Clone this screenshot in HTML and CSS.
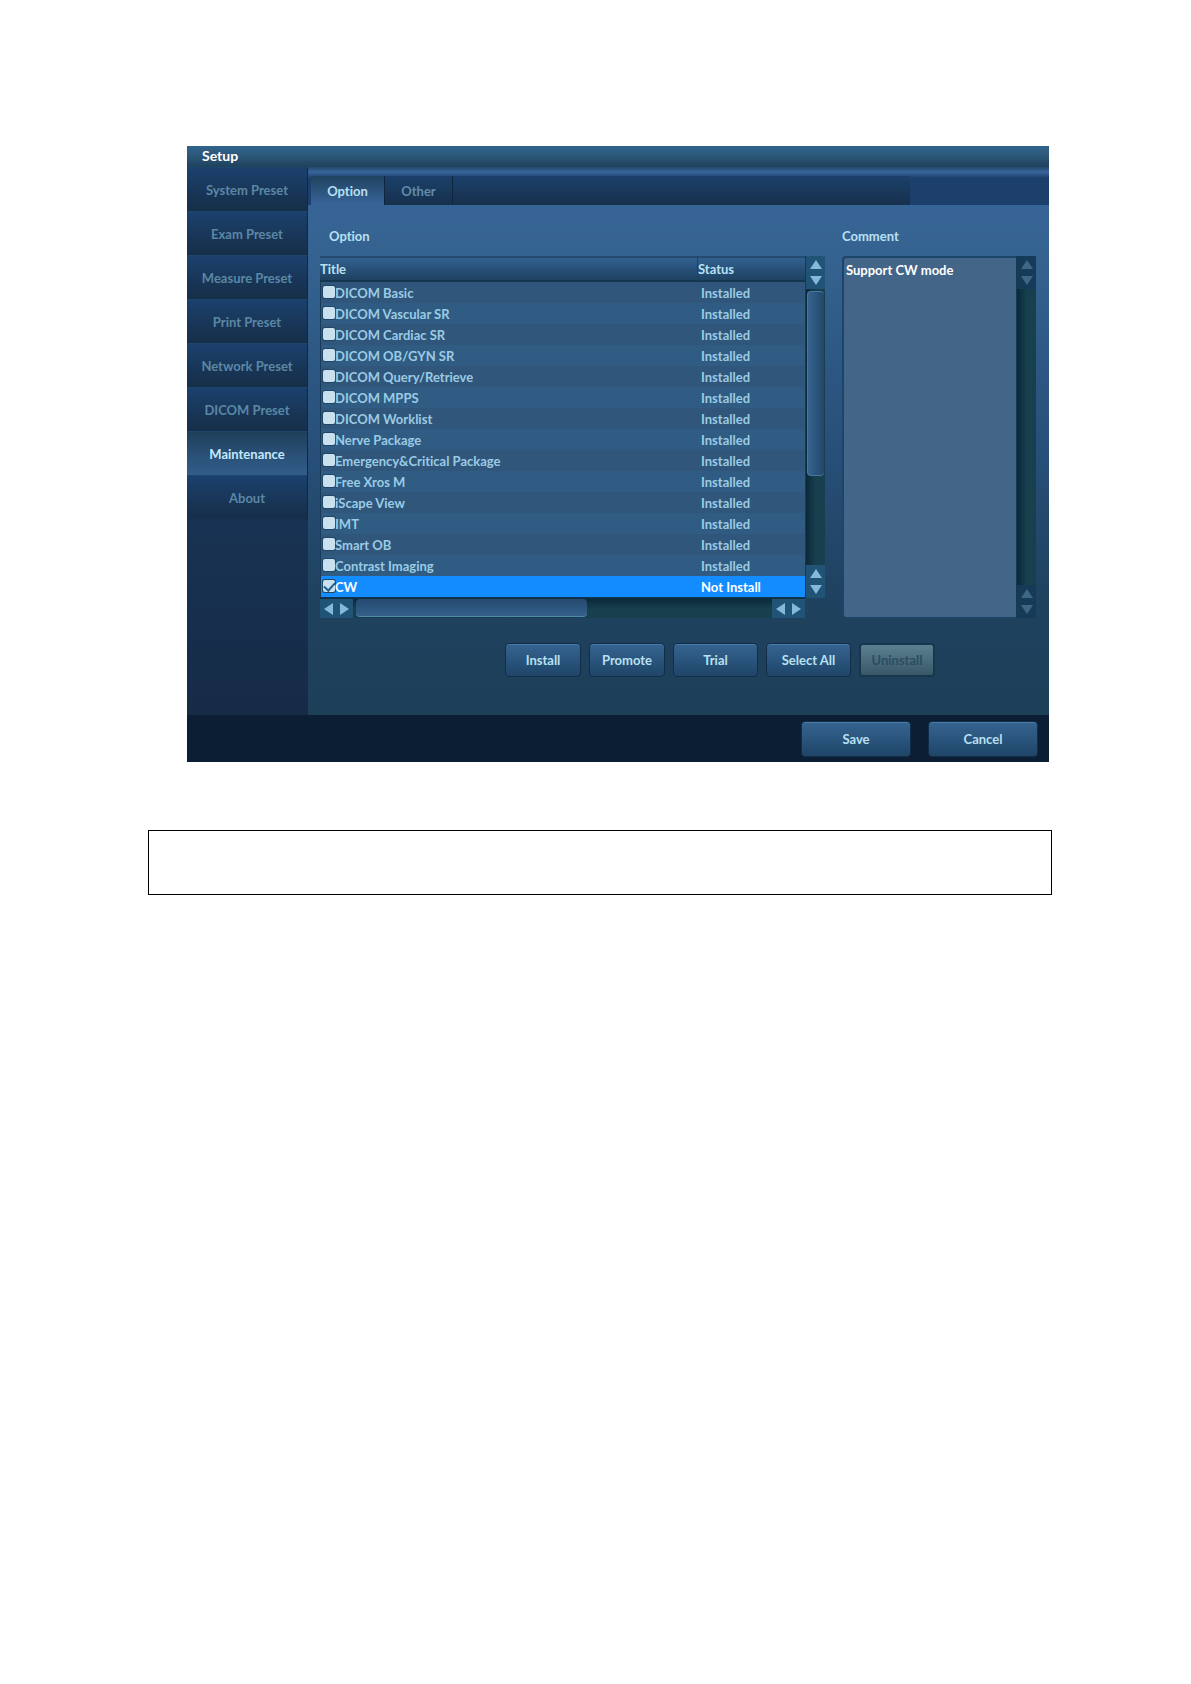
FILE: index.html
```html
<!DOCTYPE html>
<html lang="en">
<head>
    <meta charset="UTF-8">
    <meta name="viewport" content="width=device-width, initial-scale=1.0">
    <title>Setup</title>
    <link rel="stylesheet" href="styles.css">
</head>
<body>
    <div class="window">
        <h1 class="title-bar">Setup</h1>
        <div class="content">
            <nav class="sidebar">
                <button>System Preset</button>
                <button>Exam Preset</button>
                <button>Measure Preset</button>
                <button>Print Preset</button>
                <button>Network Preset</button>
                <button>DICOM Preset</button>
                <button class="active">Maintenance</button>
                <button>About</button>
            </nav>
            <main class="main">
                <div class="tabs">
                    <div class="tab-list">
                        <button class="tab active">Option</button>
                        <button class="tab">Other</button>
                    </div>
                </div>
                <div class="panel">
                    <section class="options">
                        <h2>Option</h2>
                        <div class="list">
                            <table>
                                <thead>
                                    <tr><th>Title</th><th class="status">Status</th></tr>
                                </thead>
                                <tbody>
                                    <tr><td><label><input type="checkbox">DICOM Basic</label></td><td>Installed</td></tr>
                                    <tr><td><label><input type="checkbox">DICOM Vascular SR</label></td><td>Installed</td></tr>
                                    <tr><td><label><input type="checkbox">DICOM Cardiac SR</label></td><td>Installed</td></tr>
                                    <tr><td><label><input type="checkbox">DICOM OB/GYN SR</label></td><td>Installed</td></tr>
                                    <tr><td><label><input type="checkbox">DICOM Query/Retrieve</label></td><td>Installed</td></tr>
                                    <tr><td><label><input type="checkbox">DICOM MPPS</label></td><td>Installed</td></tr>
                                    <tr><td><label><input type="checkbox">DICOM Worklist</label></td><td>Installed</td></tr>
                                    <tr><td><label><input type="checkbox">Nerve Package</label></td><td>Installed</td></tr>
                                    <tr><td><label><input type="checkbox">Emergency&amp;Critical Package</label></td><td>Installed</td></tr>
                                    <tr><td><label><input type="checkbox">Free Xros M</label></td><td>Installed</td></tr>
                                    <tr><td><label><input type="checkbox">iScape View</label></td><td>Installed</td></tr>
                                    <tr><td><label><input type="checkbox">IMT</label></td><td>Installed</td></tr>
                                    <tr><td><label><input type="checkbox">Smart OB</label></td><td>Installed</td></tr>
                                    <tr><td><label><input type="checkbox">Contrast Imaging</label></td><td>Installed</td></tr>
                                    <tr class="selected"><td><label><input type="checkbox" checked>CW</label></td><td>Not Install</td></tr>
                                </tbody>
                            </table>
                            <div class="scroll vertical">
                                <div class="arrows">
                                    <button aria-label="Scroll up"><svg viewBox="0 0 12 9"><path d="M6 0 12 9H0Z"/></svg></button>
                                    <button aria-label="Scroll down"><svg viewBox="0 0 12 9"><path d="M0 0H12L6 9Z"/></svg></button>
                                </div>
                                <div class="track"><div class="thumb"></div></div>
                                <div class="arrows">
                                    <button aria-label="Scroll up"><svg viewBox="0 0 12 9"><path d="M6 0 12 9H0Z"/></svg></button>
                                    <button aria-label="Scroll down"><svg viewBox="0 0 12 9"><path d="M0 0H12L6 9Z"/></svg></button>
                                </div>
                            </div>
                            <div class="scroll horizontal">
                                <div class="arrows">
                                    <button aria-label="Scroll left"><svg viewBox="0 0 9 12"><path d="M9 0V12L0 6Z"/></svg></button>
                                    <button aria-label="Scroll right"><svg viewBox="0 0 9 12"><path d="M0 0 9 6 0 12Z"/></svg></button>
                                </div>
                                <div class="track"><div class="thumb"></div></div>
                                <div class="arrows">
                                    <button aria-label="Scroll left"><svg viewBox="0 0 9 12"><path d="M9 0V12L0 6Z"/></svg></button>
                                    <button aria-label="Scroll right"><svg viewBox="0 0 9 12"><path d="M0 0 9 6 0 12Z"/></svg></button>
                                </div>
                            </div>
                        </div>
                    </section>
                    <section class="comment">
                        <h2><label for="comment">Comment</label></h2>
                        <div class="comment-box">
                            <textarea id="comment" readonly>Support CW mode</textarea>
                            <div class="scroll vertical disabled">
                                <div class="arrows">
                                    <button aria-label="Scroll up" disabled><svg viewBox="0 0 12 9"><path d="M6 0 12 9H0Z"/></svg></button>
                                    <button aria-label="Scroll down" disabled><svg viewBox="0 0 12 9"><path d="M0 0H12L6 9Z"/></svg></button>
                                </div>
                                <div class="track"></div>
                                <div class="arrows">
                                    <button aria-label="Scroll up" disabled><svg viewBox="0 0 12 9"><path d="M6 0 12 9H0Z"/></svg></button>
                                    <button aria-label="Scroll down" disabled><svg viewBox="0 0 12 9"><path d="M0 0H12L6 9Z"/></svg></button>
                                </div>
                            </div>
                        </div>
                    </section>
                </div>
                <div class="actions">
                    <button class="btn">Install</button>
                    <button class="btn">Promote</button>
                    <button class="btn wide">Trial</button>
                    <button class="btn wide">Select All</button>
                    <button class="btn" disabled>Uninstall</button>
                </div>
            </main>
        </div>
        <footer class="footer">
            <button class="btn large">Save</button>
            <button class="btn large">Cancel</button>
        </footer>
    </div>
    <div class="note"></div>
</body>
</html>
```

FILE: styles.css
```css
* {
    box-sizing: border-box;
}

body {
    margin: 0;
    padding: 146px 139px 0 148px;
    background-color: #fff;
    font-family: Lato, "Open Sans", sans-serif;
    font-size: 13px;
    font-weight: bold;
    font-variant-ligatures: none;
    line-height: 16px;
}

button,
textarea {
    font: inherit;
    margin: 0;
    padding: 0;
    border: none;
}

h1,
h2 {
    margin: 0;
    font-size: 13px;
    line-height: 16px;
}

.window {
    margin: 0 3px 0 39px;
    color: #b9e0f2;
}

.title-bar {
    height: 21px;
    padding: 2px 15px;
    font-size: 14px;
    color: #fff;
    background: linear-gradient(#31648e, #2b5677 50%, #1f415c);
}

.content {
    display: flex;
}

/* left menu */
.sidebar {
    width: 121px;
    background: linear-gradient(#1a416f, #183355 60%, #162b46);
}

.sidebar button {
    display: block;
    width: 100%;
    height: 44px;
    color: #5b87a5;
    background: linear-gradient(#1b416d, #183556 60%, #162f48);
    border-right: 1px solid #12283f;
    border-top: 1px solid #1c456f;
}

.sidebar .active {
    color: #c4e9fb;
    background: linear-gradient(#1f405a, #294f75 50%, #325e8a);
}

/* right side */
.main {
    flex: 1;
    min-width: 0;
    background: linear-gradient(#38659a, #356391 15%, #28507a 50%, #1f4260 78%, #1e3f58);
}

.tabs {
    padding: 9px 0 0 3px;
    background: linear-gradient(#24476b, #38659a 5px, #1c406c 11px, #1c3f6c);
}

.tab-list {
    display: flex;
    margin-right: 139px;
    background: linear-gradient(#1b406b, #17304c);
}

.tab {
    width: 68px;
    height: 29px;
    color: #5f8dab;
    background: none;
    border-right: 1px solid #10263f;
}

.tab.active {
    width: 74px;
    color: #b9e0f2;
    background: linear-gradient(#1f425e, #38659a);
}

.panel {
    display: flex;
    gap: 17px;
    padding: 23px 13px 0 12px;
}

.panel h2 {
    margin-bottom: 12px;
}

.options {
    flex: 1;
    min-width: 0;
}

.options h2 {
    padding-left: 9px;
}

.list {
    display: grid;
    grid-template-columns: 1fr 20px;
}

table {
    width: 100%;
    table-layout: fixed;
    border-collapse: separate;
    border-spacing: 0;
    text-align: left;
    border-bottom: 1px solid #0f3550;
}

th {
    height: 26px;
    padding: 0;
    border-top: 2px solid #234b6e;
    border-bottom: 2px solid #143650;
    background: linear-gradient(#316090, #1f4261);
}

th.status {
    width: 108px;
    border-left: 1px solid #1b4263;
}

td {
    height: 21px;
    padding: 0 0 0 4px;
    color: #9bcbe3;
}

td:first-child {
    padding-left: 2px;
    border-left: 1px solid #173a59;
}

tbody tr {
    background-color: #305c84;
}

tbody tr:nth-child(odd) {
    background-color: #30567c;
}

tbody tr.selected {
    background-color: #128cff;
}

.selected td {
    color: #fff;
}

td label {
    display: flex;
    align-items: center;
}

input[type="checkbox"] {
    appearance: none;
    display: flex;
    justify-content: center;
    width: 12px;
    height: 12px;
    margin: 0 0 2px;
    background-color: #c9e1ee;
    border-radius: 2px;
    box-shadow: 0 0 0 1px #1f4567;
}

input[type="checkbox"]:checked::after {
    content: "";
    width: 5px;
    height: 9px;
    border: solid #1f5f93;
    border-width: 0 2px 2px 0;
    transform: rotate(42deg);
}

/* scroll bars */
.scroll {
    display: flex;
    background-color: #173f50;
}

.vertical {
    flex-direction: column;
    width: 20px;
    border-left: 1px solid #123c52;
}

.horizontal {
    height: 20px;
    border-top: 1px solid #0f2f42;
}

.arrows {
    display: flex;
    background-color: #215377;
}

.vertical .arrows {
    flex-direction: column;
    height: 33px;
    padding: 1px 0;
}

.horizontal .arrows {
    width: 33px;
}

.arrows button {
    display: flex;
    flex: 1;
    align-items: center;
    justify-content: center;
    background: none;
}

.arrows svg {
    width: 12px;
    height: 9px;
    fill: #84b9dc;
}

.horizontal .arrows svg {
    width: 9px;
    height: 12px;
}

.track {
    flex: 1;
    background: linear-gradient(to right, #0b2838, #173f4e 50%);
}

.horizontal .track {
    padding: 0 3px;
    background: linear-gradient(#0b2838, #173f4e 50%);
}

.vertical .thumb {
    width: 17px;
    height: 67%;
    margin: 2px 0 0 1px;
    border: 1px solid #437ba0;
    border-right: none;
    border-radius: 4px;
    background: linear-gradient(to right, #34648f, #234669);
}

.horizontal .thumb {
    width: 56%;
    height: 18px;
    border-bottom: 1px solid #4f88aa;
    border-radius: 4px;
    background: linear-gradient(#26496f, #34608a);
}

.disabled .arrows {
    background-color: #163b58;
}

.disabled .arrows svg {
    fill: #3f6685;
}

/* comment */
.comment {
    display: flex;
    flex-direction: column;
    width: 194px;
}

.comment-box {
    display: flex;
    flex: 1;
}

textarea {
    flex: 1;
    min-width: 0;
    padding: 4px 2px;
    color: #fff;
    background-color: #426588;
    border: 1px solid #1c456b;
    border-width: 2px 0 1px 2px;
    border-radius: 4px 0 0 4px;
    resize: none;
    outline: none;
}

/* buttons */
.actions {
    display: flex;
    justify-content: flex-end;
    gap: 8px;
    padding: 25px 114px 38px 0;
}

.btn {
    width: 76px;
    height: 34px;
    color: #b9e0f2;
    background: linear-gradient(#356491, #1f4568);
    border: 1px solid #122d47;
    border-radius: 4px;
    box-shadow: inset 0 1px #4a7ca5;
}

.btn.wide {
    width: 85px;
}

.btn:disabled {
    color: #2b4d60;
    background: linear-gradient(#5c8091, #385867);
    border: 2px solid #173750;
    box-shadow: none;
}

.footer {
    display: flex;
    justify-content: flex-end;
    gap: 17px;
    padding: 6px 11px 5px;
    background-color: #0b1e33;
}

.btn.large {
    width: 110px;
    height: 36px;
}

.note {
    height: 65px;
    margin-top: 68px;
    border: 1px solid #000;
}
```
